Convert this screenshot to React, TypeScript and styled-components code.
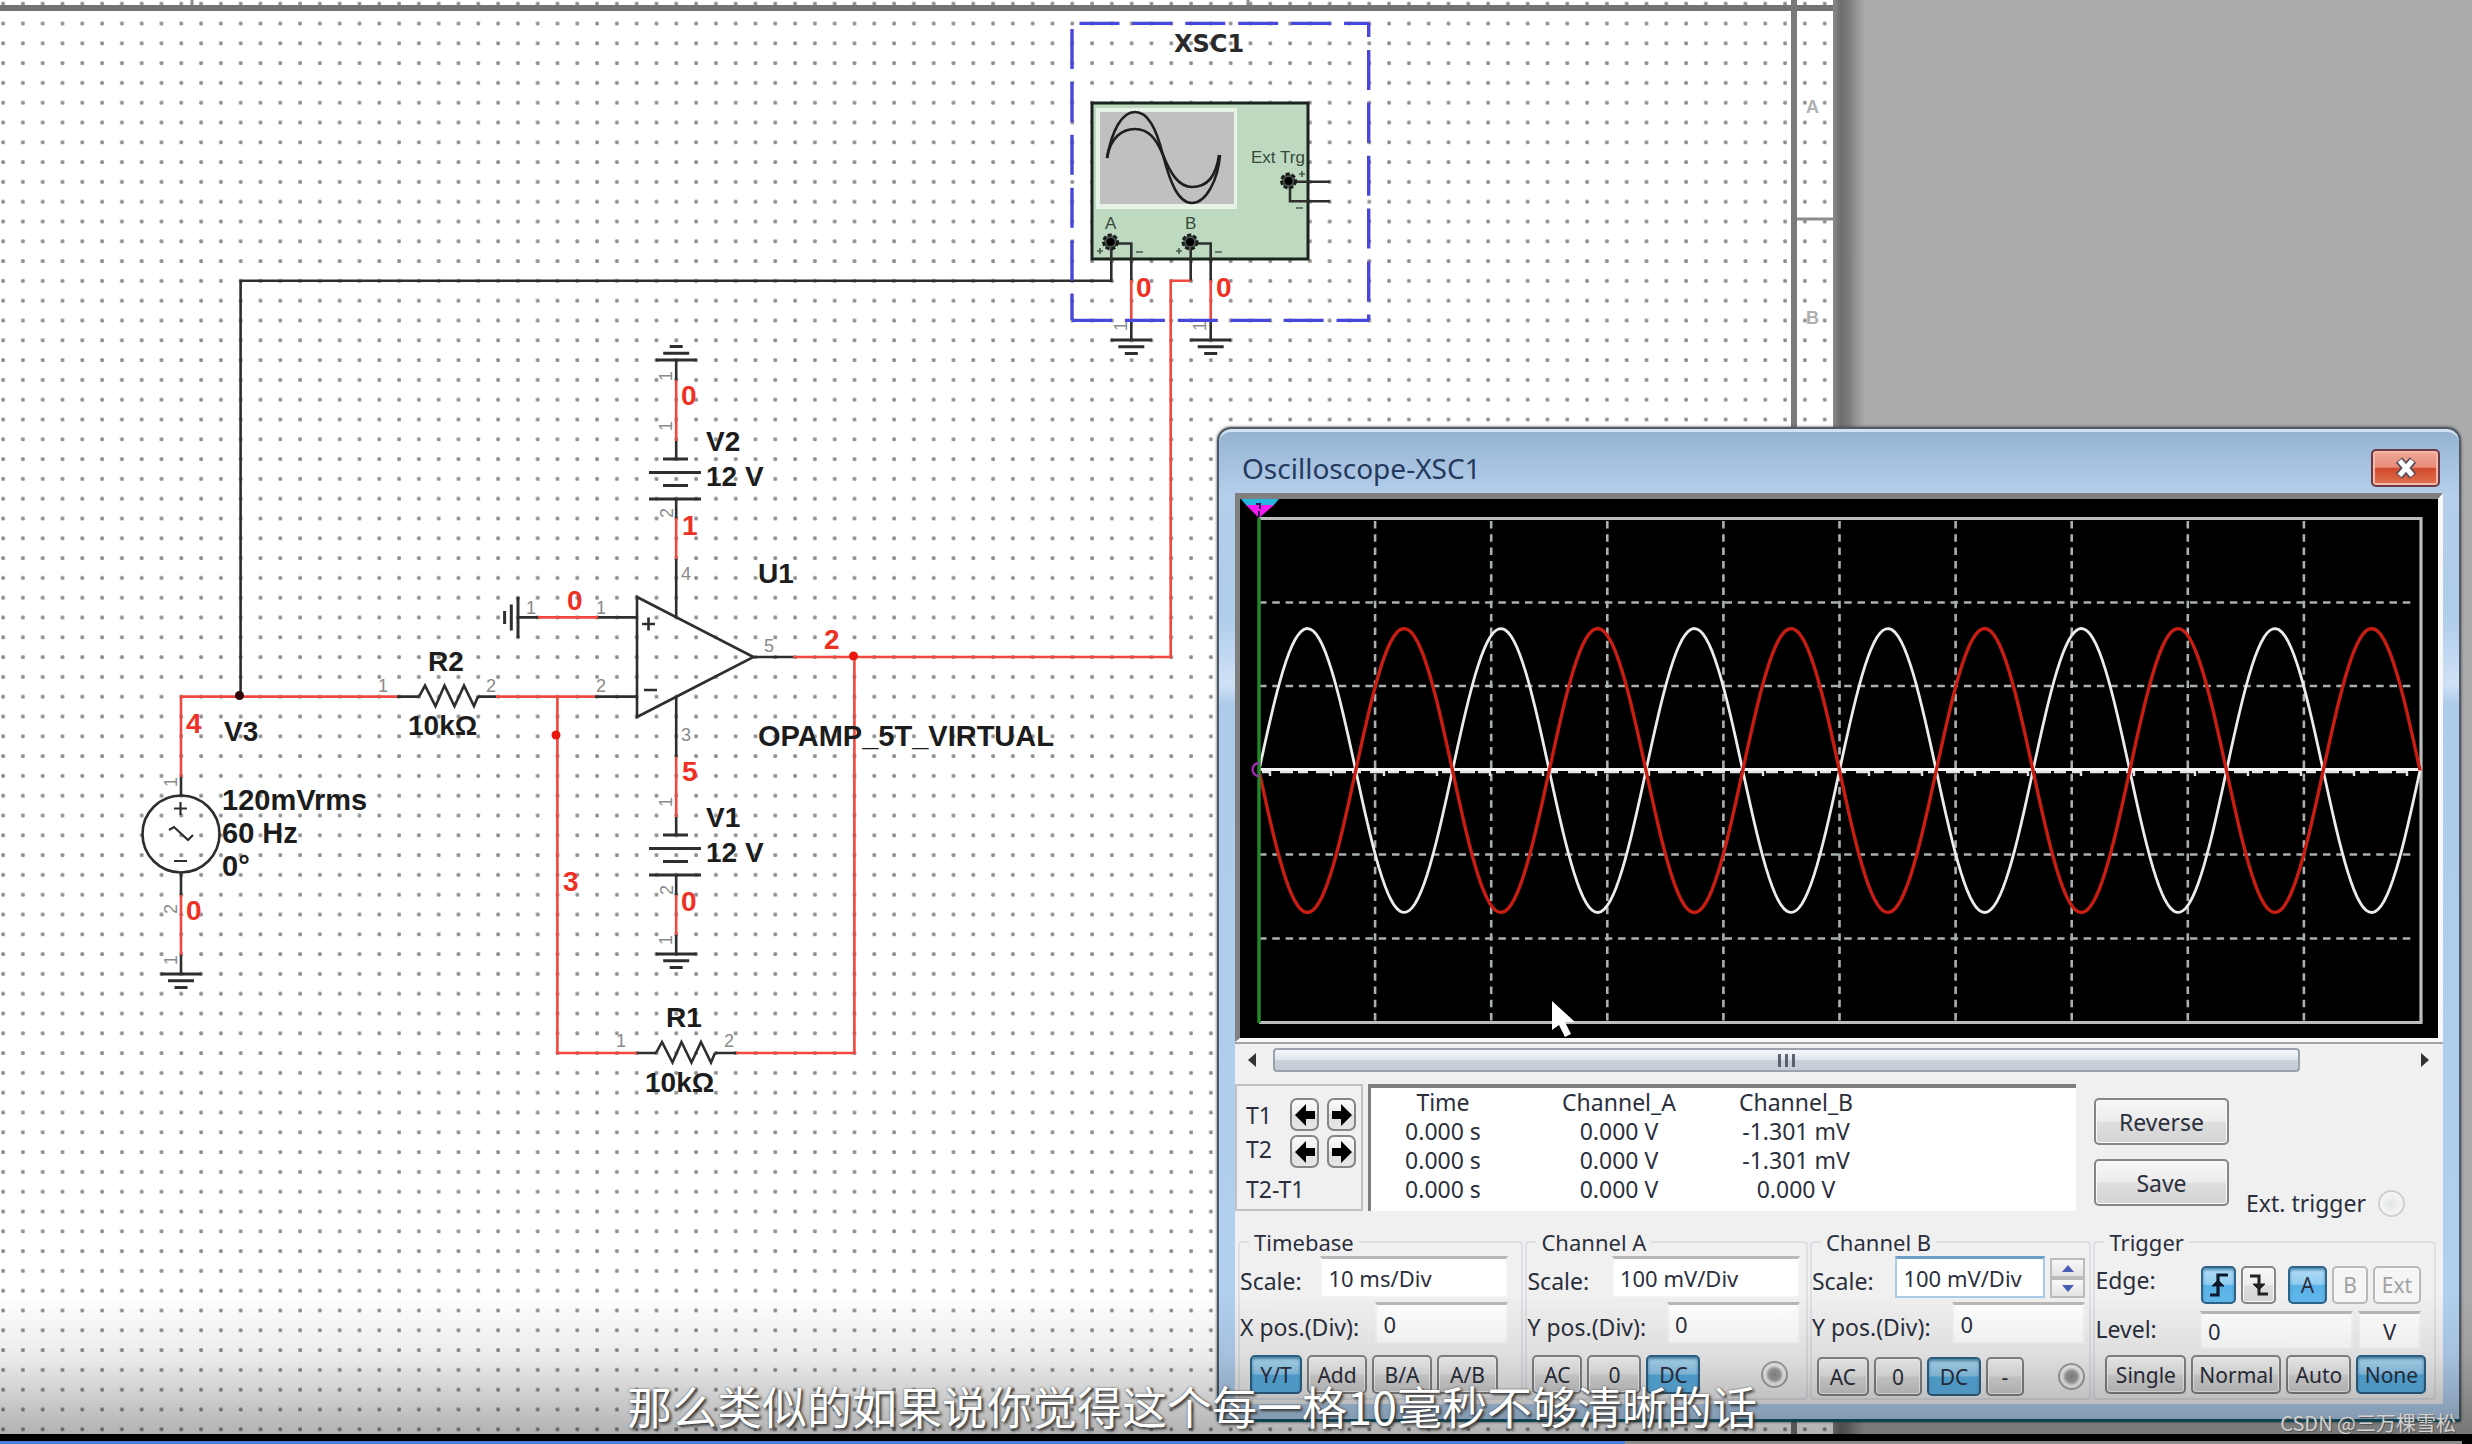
import React from "react";
import styled, { createGlobalStyle, css } from "styled-components";

const uiFont = `"Noto Sans", "Open Sans", sans-serif`;
const cjkFont = `"Noto Sans CJK SC", "Noto Sans", sans-serif`;
const ink = "#2b2f3c";

const GlobalStyle = createGlobalStyle`
  *, *::before, *::after { box-sizing: border-box; }
  body { margin: 0; background: #000; font-family: ${uiFont}; color: ${ink}; }
`;

const Page = styled.div`
  display: flex;
  flex-direction: column;
  min-height: 100vh;
`;

const Workspace = styled.main`
  position: relative;
  flex: 1;
  display: flex;
  overflow: hidden;
  background: #ababab;
`;

const SheetSvg = styled.svg`
  display: block;
  flex: none;
  width: 1833px;
  min-height: 100%;
  background: #fff;
`;

const SheetShadow = styled.div`
  flex: none;
  width: 32px;
  background: linear-gradient(90deg, #8a8a8a 0, #6c6c6c 8px, #7c7c7c 16px, #979797 24px, #ababab);
`;

/* ---------- schematic ---------- */

const WireGroup = styled.g<{ $color: string }>`
  fill: none;
  stroke: ${(p) => p.$color};
  stroke-width: 2.6px;
`;

const PartLabel = styled.text<{ $large?: boolean }>`
  font: 700 ${(p) => (p.$large ? 29 : 28)}px "Liberation Sans", sans-serif;
  fill: #1c1c1c;
`;

const NetLabel = styled.text`
  font: 700 28px "Liberation Sans", sans-serif;
  fill: #ee3124;
`;

const PinLabel = styled.text`
  font: 400 18px "Liberation Sans", sans-serif;
  fill: #8a8a8a;
`;

const ScopeLabel = styled.text`
  font: 400 17px "Liberation Sans", sans-serif;
  fill: #36483a;
`;

const ScopeName = styled.text`
  font: 700 24px "DejaVu Sans", sans-serif;
  fill: #2a2a2a;
`;

const ZoneLabel = styled.text`
  font: 700 18px "Liberation Sans", sans-serif;
  fill: #b0b0b0;
`;

const RED = "#f0483e";
const BLACK = "#2e2e2e";

const Ground = ({ x, y, turn = 0 }: { x: number; y: number; turn?: number }) => (
  <path
    transform={`translate(${x} ${y}) rotate(${turn})`}
    strokeWidth={3}
    d="M-20.5 0H20.5M-13 6.7H13M-6.5 13.4H6.5"
  />
);

const Battery = ({ y }: { y: number }) => (
  <path
    strokeWidth={3}
    d={`M663 ${y}h25M649 ${y + 13.5}h52M663 ${y + 26.5}h25M649 ${y + 40}h52`}
  />
);

const resistor = (x: number, y: number) =>
  `M${x} ${y}l6 -11l10.5 20.5l9 -20.5l10 20.5l9.5 -20.5l10 20.5l4 -9.5`;

const TurnedPin = ({ x, y, children }: { x: number; y: number; children: string }) => (
  <PinLabel transform={`translate(${x} ${y}) rotate(-90)`}>{children}</PinLabel>
);

const Jack = ({ x, y }: { x: number; y: number }) => (
  <g>
    <circle cx={x} cy={y} r={7} fill="#4c5a50" stroke="#1d1d1d" strokeWidth={3} strokeDasharray="4 2" />
    <circle cx={x} cy={y} r={4} fill="#000" />
  </g>
);

const Schematic = () => (
  <SheetSvg role="img" aria-label="Inverting amplifier schematic">
    <defs>
      <pattern id="dots" x="-6.9" y="-6.3" width="19.8" height="19.8" patternUnits="userSpaceOnUse">
        <rect x="8.2" y="8.2" width="3.6" height="3.6" rx="1" fill="#8e8e8e" />
      </pattern>
    </defs>
    <rect width="100%" height="100%" fill="url(#dots)" />
    <rect y="5" width="1833" height="6" fill="#737373" />
    <rect x="1791" width="6" height="100%" fill="#7a7a7a" />
    <path d="M192 0V5M1248 0V5M1797 219H1833" stroke="#8c8c8c" strokeWidth="3" />
    <ZoneLabel x="1806" y="113">A</ZoneLabel>
    <ZoneLabel x="1806" y="324">B</ZoneLabel>

    {/* instrument body */}
    <rect x="1092" y="103" width="216" height="156" fill="#bdd9bf" stroke="#1b241c" strokeWidth="3" />
    <rect x="1096" y="108" width="141" height="101" fill="#e8f3e8" />
    <rect x="1100" y="112" width="134" height="92" fill="#c0c0c0" />
    <g fill="none" stroke="#1e1e1e" strokeWidth="2.6">
      <path d="M1107 158C1112 130 1122 112 1135 112S1156 128 1163 155S1178 203 1192 203S1218 180 1220 155" />
      <path d="M1107 158C1110 138 1122 129 1135 129S1156 138 1163 155S1178 187 1192 187S1216 178 1219 155" />
    </g>
    <ScopeLabel x="1251" y="163">Ext Trg</ScopeLabel>
    <ScopeLabel x="1105" y="229">A</ScopeLabel>
    <ScopeLabel x="1185" y="229">B</ScopeLabel>

    <WireGroup $color={BLACK}>
      {/* source wire to scope channel A */}
      <path d="M240.6 697V280.8H1111.3V242" />
      <path d="M1110 243.5H1131.3V280M1131.3 320V340" />
      <path d="M1190.7 280.8V243.5H1210.7V280M1210.7 320V340" />
      <path d="M1289 181.7H1330M1290 181V201.3H1330" />
      <Ground x={1131.3} y={340} />
      <Ground x={1210.7} y={340} />
      <path d="M1296 208h7M1136 252h7M1215 252h7M1097 251h6M1100 248v6M1176 251h6M1179 248v6M1299 174h6M1302 171v6" stroke="#4a5a4d" strokeWidth="1.6" />
      {/* V2 branch */}
      <Ground x={676.2} y={360} turn={180} />
      <path d="M676.2 360V380M676.2 441V459M676.2 499V518M676.2 559V616" />
      <Battery y={459} />
      {/* op-amp */}
      <path d="M637 597V717L753.5 657Z" />
      <path d="M642 624h13M648.5 617.5v13M644 690h13" />
      <path d="M518 617.4H538M598 617.4H637M595 696.6H637M753 657H793.5" />
      <Ground x={518} y={617.4} turn={90} />
      {/* V1 branch */}
      <path d="M676.2 697V757M676.2 817V835M676.2 875V895M676.2 935V954" />
      <Battery y={835} />
      <Ground x={676.2} y={954} />
      {/* resistors */}
      <path d="M397 696.6H419M478 696.6H496M637 1053H656M715 1053H736" />
      <path d={resistor(419, 696.6)} />
      <path d={resistor(656, 1053)} />
      {/* V3 source */}
      <circle cx="181" cy="834" r="38.5" />
      <path d="M174 808.5h13M180.5 802v13M174 861h13M169 830l5 -3l14 13l5 -5" strokeWidth="2.2" />
      <path d="M181 777V796M181 873V895M181 955V974" />
      <Ground x={181} y={974} />
    </WireGroup>

    <WireGroup $color={RED}>
      <path d="M181 777V696.6H397M181 895V955" />
      <path d="M496 696.6H595M557.4 696.6V1053H637M736 1053H854.4V657" />
      <path d="M793.5 657H1170.7V280.8H1190.7" />
      <path d="M538 617.4H598M1131.3 280V320M1210.7 280V320" />
      <path d="M676.2 380V441M676.2 518V559M676.2 757V817M676.2 895V935" />
    </WireGroup>

    <circle cx="239.5" cy="695.5" r="4.5" fill="#2a0606" />
    <circle cx="556" cy="735" r="4.5" fill="#e8190c" />
    <circle cx="853.5" cy="656" r="4.5" fill="#e8190c" />

    <Jack x={1110.5} y={242} />
    <Jack x={1190} y={242} />
    <Jack x={1288.5} y={181} />

    <g fill="none" stroke="#4747dc" strokeWidth="3.4" strokeDasharray="40 12.9">
      <path d="M1079.5 23.4H1369" />
      <path d="M1072 29V320" />
      <path d="M1072 320.4H1369" />
      <path d="M1368.7 23V320" strokeDashoffset="26" />
    </g>

    <ScopeName x="1174" y="52">XSC1</ScopeName>
    <PartLabel x="706" y="451">V2</PartLabel>
    <PartLabel x="706" y="486">12 V</PartLabel>
    <PartLabel x="758" y="583">U1</PartLabel>
    <PartLabel x="758" y="746" $large>OPAMP_5T_VIRTUAL</PartLabel>
    <PartLabel x="428" y="671">R2</PartLabel>
    <PartLabel x="408" y="735">10kΩ</PartLabel>
    <PartLabel x="224" y="741">V3</PartLabel>
    <PartLabel x="222" y="810" $large>120mVrms</PartLabel>
    <PartLabel x="222" y="843" $large>60 Hz</PartLabel>
    <PartLabel x="222" y="876" $large>0°</PartLabel>
    <PartLabel x="706" y="827">V1</PartLabel>
    <PartLabel x="706" y="862">12 V</PartLabel>
    <PartLabel x="666" y="1027">R1</PartLabel>
    <PartLabel x="645" y="1092">10kΩ</PartLabel>

    <NetLabel x="1136" y="297">0</NetLabel>
    <NetLabel x="1216" y="297">0</NetLabel>
    <NetLabel x="681" y="405">0</NetLabel>
    <NetLabel x="682" y="535">1</NetLabel>
    <NetLabel x="567" y="610">0</NetLabel>
    <NetLabel x="824" y="649">2</NetLabel>
    <NetLabel x="186" y="733">4</NetLabel>
    <NetLabel x="682" y="781">5</NetLabel>
    <NetLabel x="563" y="891">3</NetLabel>
    <NetLabel x="681" y="911">0</NetLabel>
    <NetLabel x="186" y="920">0</NetLabel>

    <PinLabel x="526" y="614">1</PinLabel>
    <PinLabel x="596" y="614">1</PinLabel>
    <PinLabel x="378" y="692">1</PinLabel>
    <PinLabel x="486" y="692">2</PinLabel>
    <PinLabel x="596" y="692">2</PinLabel>
    <PinLabel x="681" y="580">4</PinLabel>
    <PinLabel x="764" y="652">5</PinLabel>
    <PinLabel x="681" y="741">3</PinLabel>
    <PinLabel x="616" y="1047">1</PinLabel>
    <PinLabel x="724" y="1047">2</PinLabel>
    <TurnedPin x={672} y={381}>1</TurnedPin>
    <TurnedPin x={672} y={431}>1</TurnedPin>
    <TurnedPin x={673} y={518}>2</TurnedPin>
    <TurnedPin x={672} y={807}>1</TurnedPin>
    <TurnedPin x={673} y={895}>2</TurnedPin>
    <TurnedPin x={672} y={945}>1</TurnedPin>
    <TurnedPin x={177} y={787}>1</TurnedPin>
    <TurnedPin x={177} y={914}>2</TurnedPin>
    <TurnedPin x={177} y={965}>1</TurnedPin>
    <TurnedPin x={1127} y={331}>1</TurnedPin>
    <TurnedPin x={1206} y={331}>1</TurnedPin>
  </SheetSvg>
);

/* ---------- oscilloscope window ---------- */

const Window = styled.section`
  position: absolute;
  top: 427px;
  left: 1217px;
  right: 11px;
  border: 2px solid #4f5a66;
  border-bottom: 3px solid #155a6c;
  border-radius: 14px 14px 2px 2px;
  padding: 0 16px 15px;
  background: linear-gradient(#94b2d0 0, #b4ceec 64px, #b0cdec 190px, #cfe1f6 255px, #aecbec 275px, #b2d0f0 100%);
  box-shadow: inset 0 4px 0 -1px #d3e2f1, 0 0 3px #444;
`;

const TitleBar = styled.header`
  display: flex;
  align-items: center;
  justify-content: space-between;
  height: 64px;
  padding: 14px 3px 0 7px;
`;

const Title = styled.h1`
  margin: 0;
  font-size: 28px;
  line-height: 36px;
  font-weight: 400;
  color: #24395c;
`;

const CloseButton = styled.button`
  display: grid;
  place-items: center;
  width: 69px;
  height: 38px;
  padding: 0;
  border: 2px solid #6d3a44;
  border-radius: 5px;
  background: linear-gradient(#efa898 0, #e88c78 48%, #cf4a2a 50%, #e0704e 100%);
  box-shadow: inset 0 0 0 2px #f3b9a9;
`;

const Client = styled.div`
  background: #f0f0f0;
`;

const Screen = styled.div`
  border: solid;
  border-width: 6px 5px 4px;
  border-color: #808080 #f8f8f8 #f8f8f8 #808080;
  background: #000;
  box-shadow: 0 2px 0 #a0a4aa;
`;

const ScreenSvg = styled.svg`
  display: block;
  width: 100%;
`;

const wave = (sign: number) => {
  const pts: string[] = [];
  for (let x = 0; x <= 1161; x += 3) {
    const y = 271.5 - sign * 142 * Math.sin((x / 193.5) * Math.PI * 2);
    pts.push(`${19 + x},${y.toFixed(1)}`);
  }
  return pts.join(" ");
};

const jitter = Array.from({ length: 64 }, (_, i) => {
  const w = 8 + ((i * 5) % 8);
  return `M${22 + i * 18} 273h${w}${i % 3 === 0 ? "v4" : ""}`;
}).join("");

const Trace = () => (
  <Screen>
    <ScreenSvg viewBox="0 0 1198 539" role="img" aria-label="Channel traces">
      <g stroke="#a9b0b0" strokeWidth="2.6" strokeDasharray="7.5 5.8">
        {[1, 2, 3, 4, 5, 6, 7, 8, 9].map((n) => (
          <path key={n} d={`M${19 + n * 116.1} 22V523`} />
        ))}
        {[103.5, 187, 355.5, 439.5].map((y) => (
          <path key={y} d={`M19 ${y}H1176`} />
        ))}
      </g>
      <path d="M19 19.5H1181V523.5H19" fill="none" stroke="#bdbdbd" strokeWidth="3.2" />
      <path d="M19 270.5H1181" stroke="#f6f6f6" strokeWidth="3.2" />
      <path d={jitter} fill="none" stroke="#e4e4e4" strokeWidth="2.4" />
      <polyline points={wave(1)} fill="none" stroke="#ececec" strokeWidth="2.8" />
      <polyline points={wave(-1)} fill="none" stroke="#c81d12" strokeWidth="3.4" />
      <path d="M19 19V524" stroke="#1f8a27" strokeWidth="3.4" />
      <path d="M1 0H39L33 7H7Z" fill="#27b6e0" />
      <path d="M6 6H34L19 19Z" fill="#f41cf0" />
      <path d="M16 5h4v5M19 12v6" fill="none" stroke="#301050" strokeWidth="2" />
      <path d="M19 264A6.5 6.5 0 1 0 19 277" fill="none" stroke="#a028b4" strokeWidth="2.4" />
      <path d="M312 502V531L319 526L325 538L331 535L325 523H335Z" fill="#fff" />
    </ScreenSvg>
  </Screen>
);

const ScrollRow = styled.div`
  display: flex;
  align-items: center;
  height: 42px;
  padding: 4px 2px 10px 1px;
`;

const ScrollArrow = styled.button`
  display: grid;
  place-items: center;
  width: 32px;
  height: 24px;
  padding: 0;
  border: 0;
  background: #f0f0f0;
`;

const ScrollTrack = styled.div`
  flex: 1;
  display: flex;
  height: 24px;
  padding: 0 109px 0 5px;
  background: #f1f1f1;
`;

const ScrollThumb = styled.div`
  flex: 1;
  display: flex;
  align-items: center;
  justify-content: center;
  gap: 4px;
  border: 2px solid #9aa3ad;
  border-radius: 4px;
  background: linear-gradient(#f4f7fa, #dfe5ec 48%, #c9d1da 52%, #c4ccd6);
`;

const Grip = styled.i`
  width: 3px;
  height: 13px;
  background: #5a6470;
`;

const ReadingRow = styled.div`
  display: flex;
  align-items: flex-start;
  min-height: 144px;
`;

const CursorPanel = styled.div`
  flex: none;
  display: grid;
  grid-template-columns: 1fr auto;
  grid-template-rows: 34px 36px 1fr;
  width: 128px;
  height: 127px;
  margin-right: 5px;
  padding: 12px 5px 0 9px;
  border: 2px solid #c2c2c2;
  font-size: 23px;
  line-height: 34px;
`;

const ArrowPad = styled.div`
  grid-column: 2;
  grid-row: 1 / 3;
  display: grid;
  grid-template-columns: 29px 29px;
  gap: 4px 8px;
`;

const Difference = styled.span`
  grid-column: 1 / 3;
  line-height: 42px;
`;

const ArrowButton = styled.button`
  display: grid;
  place-items: center;
  padding: 0;
  border: 2px solid #858585;
  border-radius: 7px;
  background: linear-gradient(#fafafa, #ececec 50%, #dedede 50%, #e6e6e6);
`;

const Readout = styled.div`
  flex: 1;
  height: 127px;
  border-top: 4px solid #7f7f7f;
  border-left: 3px solid #7f7f7f;
  background: #fff;
`;

const ReadoutTable = styled.table`
  width: 498px;
  table-layout: fixed;
  border-collapse: collapse;
  font-size: 23px;
  line-height: 29px;
  text-align: center;

  th, td { padding: 0; font-weight: 400; white-space: nowrap; }
`;

const Actions = styled.div`
  flex: none;
  display: grid;
  grid-template-columns: 135px 1fr;
  column-gap: 17px;
  width: 367px;
  padding: 14px 0 0 18px;
`;

const ActionStack = styled.div`
  display: grid;
  gap: 14px;
`;

const ExtTrigger = styled.label`
  align-self: end;
  display: flex;
  align-items: center;
  gap: 12px;
  height: 6px;
  font-size: 23px;
  line-height: 28px;
  white-space: nowrap;
`;

const Radio = styled.input<{ $faint?: boolean }>`
  appearance: none;
  flex: none;
  width: 27px;
  height: 27px;
  margin: 0;
  border: 2px solid ${(p) => (p.$faint ? "#cfcfcf" : "#a3a3a3")};
  border-radius: 50%;
  background: ${(p) =>
    p.$faint
      ? "radial-gradient(#e2e6e2, #f6f6f6 70%)"
      : "radial-gradient(circle, #8d8d8d 0, #a5a5a5 6px, #dcdcdc 8px, #f2f2f2 9px)"};
`;

const PushButton = styled.button<{ $w: number; $h?: number; $big?: boolean }>`
  display: grid;
  place-items: center;
  flex: none;
  width: ${(p) => p.$w}px;
  height: ${(p) => p.$h ?? 39}px;
  padding: 0;
  border: 2px solid #868686;
  border-radius: 5px;
  background: linear-gradient(#f6f6f6 0, #ededed 48%, #dedede 52%, #d4d4d4 100%);
  box-shadow: inset 0 0 0 1px #fafafa;
  font: 400 ${(p) => (p.$big ? 23 : 21)}px/28px ${uiFont};
  color: ${ink};
  white-space: nowrap;

  ${(p) =>
    p["aria-pressed"] &&
    css`
      border-color: #2e6488;
      background: linear-gradient(#b4def6 0, #8fcbf0 48%, #58b0e6 52%, #62b8ec 100%);
      box-shadow: inset 0 2px 3px #4b88ae;
    `}

  &:disabled {
    border-color: #b9b9b9;
    background: #f5f5f5;
    color: #a2a2a2;
  }
`;

const Groups = styled.div`
  display: grid;
  grid-template-columns: 285fr 282fr 281fr 342fr;
  gap: 2px;
  padding: 0 7px 4px 3px;
`;

const Group = styled.fieldset<{ $end: number }>`
  min-width: 0;
  margin: 0;
  padding: 0 ${(p) => p.$end}px 2px 0;
  border: 2px solid #dce0e5;
  border-radius: 4px;
`;

const Legend = styled.legend`
  margin-left: 9px;
  padding: 0 5px;
  font-size: 22px;
  line-height: 28px;
`;

const FieldRow = styled.div<{ $h?: number }>`
  display: flex;
  align-items: flex-end;
  gap: 5px;
  height: ${(p) => p.$h ?? 42}px;
  margin-bottom: 4px;
`;

const FieldLabel = styled.label<{ $flat?: boolean }>`
  flex: 1;
  align-self: center;
  padding-top: ${(p) => (p.$flat ? 0 : 7)}px;
  font-size: 23px;
  line-height: 28px;
  white-space: nowrap;
`;

const Field = styled.input<{ $w: number; $h?: number; $focus?: boolean; $center?: boolean }>`
  flex: none;
  width: ${(p) => p.$w}px;
  height: ${(p) => p.$h ?? 42}px;
  margin: 0;
  padding: 0 6px;
  border: 2px solid ${(p) => (p.$focus ? "#a9cbe8" : "#f4f4f4")};
  border-top: 3px solid ${(p) => (p.$focus ? "#6f9fc6" : "#b8b8b8")};
  border-radius: 0;
  outline: 0;
  background: #fff;
  font: 400 22px/28px ${uiFont};
  color: ${ink};
  text-align: ${(p) => (p.$center ? "center" : "left")};
`;

const Spinner = styled.div`
  flex: none;
  display: grid;
  grid-template-rows: 1fr 1fr;
  width: 35px;
  height: 40px;
`;

const SpinButton = styled.button`
  display: grid;
  place-items: center;
  padding: 0;
  border: 2px solid #bcbcbc;
  background: linear-gradient(#f8f8f8, #e4e4e4);
`;

const ButtonRow = styled.div<{ $left: number; $top?: number }>`
  display: flex;
  align-items: center;
  gap: 5px;
  padding: ${(p) => p.$top ?? 7}px 0 0 ${(p) => p.$left}px;
`;

const Lamp = styled.span<{ $end?: number }>`
  display: flex;
  margin-left: auto;
  margin-right: ${(p) => p.$end ?? 0}px;
`;

const Spacer = styled.span`
  flex: none;
  width: 2px;
`;

const BlockArrow = ({ right }: { right?: boolean }) => (
  <svg width="22" height="22" viewBox="0 0 22 22" aria-hidden="true">
    <path d={right ? "M1 7H10V0L21 11L10 22V15H1Z" : "M21 7H12V0L1 11L12 22V15H21Z"} fill="#000" />
  </svg>
);

const Oscilloscope = () => (
  <Window aria-label="Oscilloscope-XSC1">
    <TitleBar>
      <Title>Oscilloscope-XSC1</Title>
      <CloseButton aria-label="Close">
        <svg width="28" height="24" viewBox="0 0 28 24" aria-hidden="true">
          <path d="M7 4L21 20M21 4L7 20" stroke="#5d4e5c" strokeWidth="8.5" />
          <path d="M7.6 4.6L20.4 19.4M20.4 4.6L7.6 19.4" stroke="#fff" strokeWidth="5" />
        </svg>
      </CloseButton>
    </TitleBar>
    <Client>
      <Trace />
      <ScrollRow>
        <ScrollArrow aria-label="Scroll left">
          <svg width="10" height="14" aria-hidden="true"><path d="M9 0V14L1 7Z" fill="#333" /></svg>
        </ScrollArrow>
        <ScrollTrack>
          <ScrollThumb><Grip /><Grip /><Grip /></ScrollThumb>
        </ScrollTrack>
        <ScrollArrow aria-label="Scroll right">
          <svg width="10" height="14" aria-hidden="true"><path d="M1 0V14L9 7Z" fill="#333" /></svg>
        </ScrollArrow>
      </ScrollRow>

      <ReadingRow>
        <CursorPanel>
          <span>T1</span>
          <ArrowPad>
            <ArrowButton aria-label="T1 left"><BlockArrow /></ArrowButton>
            <ArrowButton aria-label="T1 right"><BlockArrow right /></ArrowButton>
            <ArrowButton aria-label="T2 left"><BlockArrow /></ArrowButton>
            <ArrowButton aria-label="T2 right"><BlockArrow right /></ArrowButton>
          </ArrowPad>
          <span>T2</span>
          <Difference>T2-T1</Difference>
        </CursorPanel>
        <Readout>
          <ReadoutTable>
            <colgroup>
              <col style={{ width: 144 }} />
              <col style={{ width: 208 }} />
              <col style={{ width: 146 }} />
            </colgroup>
            <thead>
              <tr><th>Time</th><th>Channel_A</th><th>Channel_B</th></tr>
            </thead>
            <tbody>
              <tr><td>0.000 s</td><td>0.000 V</td><td>-1.301 mV</td></tr>
              <tr><td>0.000 s</td><td>0.000 V</td><td>-1.301 mV</td></tr>
              <tr><td>0.000 s</td><td>0.000 V</td><td>0.000 V</td></tr>
            </tbody>
          </ReadoutTable>
        </Readout>
        <Actions>
          <ActionStack>
            <PushButton $w={135} $h={47} $big>Reverse</PushButton>
            <PushButton $w={135} $h={47} $big>Save</PushButton>
          </ActionStack>
          <ExtTrigger>
            Ext. trigger
            <Radio type="radio" name="ext" $faint />
          </ExtTrigger>
        </Actions>
      </ReadingRow>

      <Groups>
        <Group $end={13}>
          <Legend>Timebase</Legend>
          <FieldRow>
            <FieldLabel htmlFor="tb-scale">Scale:</FieldLabel>
            <Field id="tb-scale" $w={188} defaultValue="10 ms/Div" />
          </FieldRow>
          <FieldRow>
            <FieldLabel htmlFor="tb-pos">X pos.(Div):</FieldLabel>
            <Field id="tb-pos" $w={133} defaultValue="0" />
          </FieldRow>
          <ButtonRow $left={10}>
            <PushButton $w={52} aria-pressed>Y/T</PushButton>
            <PushButton $w={60}>Add</PushButton>
            <PushButton $w={60}>B/A</PushButton>
            <PushButton $w={61}>A/B</PushButton>
          </ButtonRow>
        </Group>

        <Group $end={6}>
          <Legend>Channel A</Legend>
          <FieldRow>
            <FieldLabel htmlFor="a-scale">Scale:</FieldLabel>
            <Field id="a-scale" $w={188} defaultValue="100 mV/Div" />
          </FieldRow>
          <FieldRow>
            <FieldLabel htmlFor="a-pos">Y pos.(Div):</FieldLabel>
            <Field id="a-pos" $w={133} defaultValue="0" />
          </FieldRow>
          <ButtonRow $left={5}>
            <PushButton $w={50}>AC</PushButton>
            <PushButton $w={54}>0</PushButton>
            <PushButton $w={54} aria-pressed>DC</PushButton>
            <Lamp $end={12}><Radio type="radio" name="ch-a" aria-label="Channel A input" /></Lamp>
          </ButtonRow>
        </Group>

        <Group $end={4}>
          <Legend>Channel B</Legend>
          <FieldRow>
            <FieldLabel htmlFor="b-scale">Scale:</FieldLabel>
            <Field id="b-scale" $w={150} defaultValue="100 mV/Div" $focus />
            <Spinner>
              <SpinButton aria-label="Increase">
                <svg width="12" height="7" aria-hidden="true"><path d="M0 7H12L6 0Z" fill="#4a5fb4" /></svg>
              </SpinButton>
              <SpinButton aria-label="Decrease">
                <svg width="12" height="7" aria-hidden="true"><path d="M0 0H12L6 7Z" fill="#4a5fb4" /></svg>
              </SpinButton>
            </Spinner>
          </FieldRow>
          <FieldRow>
            <FieldLabel htmlFor="b-pos">Y pos.(Div):</FieldLabel>
            <Field id="b-pos" $w={133} defaultValue="0" />
          </FieldRow>
          <ButtonRow $left={5} $top={9}>
            <PushButton $w={52}>AC</PushButton>
            <PushButton $w={48}>0</PushButton>
            <PushButton $w={54} aria-pressed>DC</PushButton>
            <PushButton $w={38}>-</PushButton>
            <Lamp><Radio type="radio" name="ch-b" aria-label="Channel B input" /></Lamp>
          </ButtonRow>
        </Group>

        <Group $end={13}>
          <Legend>Trigger</Legend>
          <FieldRow $h={48}>
            <FieldLabel as="span" $flat>Edge:</FieldLabel>
            <PushButton $w={35} $h={38} aria-pressed aria-label="Rising edge">
              <svg width="24" height="26" viewBox="0 0 24 26" fill="none" stroke="#0c1a2c" strokeWidth="3.2" aria-hidden="true">
                <path d="M3 23H11V3H21" />
                <path d="M5 14L11 8L17 14Z" fill="#0c1a2c" strokeWidth="1" />
              </svg>
            </PushButton>
            <PushButton $w={35} $h={38} aria-label="Falling edge">
              <svg width="24" height="26" viewBox="0 0 24 26" fill="none" stroke="#222" strokeWidth="3" aria-hidden="true">
                <path d="M3 4H12V22H21" />
                <path d="M6 12L12 18L18 12Z" fill="#222" strokeWidth="1" />
              </svg>
            </PushButton>
            <Spacer />
            <PushButton $w={39} $h={38} aria-pressed>A</PushButton>
            <PushButton $w={36} $h={38} disabled>B</PushButton>
            <PushButton $w={48} $h={38} disabled>Ext</PushButton>
          </FieldRow>
          <FieldRow>
            <FieldLabel htmlFor="level" $flat>Level:</FieldLabel>
            <Field id="level" $w={153} $h={39} defaultValue="0" />
            <Field aria-label="Level unit" $w={63} $h={39} defaultValue="V" $center />
          </FieldRow>
          <ButtonRow $left={10} $top={1}>
            <PushButton $w={81}>Single</PushButton>
            <PushButton $w={90}>Normal</PushButton>
            <PushButton $w={65}>Auto</PushButton>
            <PushButton $w={70} aria-pressed>None</PushButton>
          </ButtonRow>
        </Group>
      </Groups>
    </Client>
  </Window>
);

/* ---------- player overlay ---------- */

const Shade = styled.div`
  position: absolute;
  inset: auto 0 0;
  height: 140px;
  background: linear-gradient(rgba(0, 0, 0, 0), rgba(0, 0, 0, 0.08) 45%, rgba(0, 0, 0, 0.3));
  pointer-events: none;
`;

const Caption = styled.p`
  position: absolute;
  inset: auto 88px 0 0;
  margin: 0;
  font: 400 45px/56px ${cjkFont};
  color: #fff;
  text-align: center;
  text-shadow: 2px 2px 3px #333, 0 0 2px #555;
`;

const Watermark = styled.p`
  position: absolute;
  right: 16px;
  bottom: 0;
  margin: 0;
  font: 400 20px/22px ${cjkFont};
  color: #d2d2d2;
  text-shadow: 1px 1px 1px #555;
`;

const PlayerBar = styled.footer`
  display: flex;
  padding: 7px 10px 0 0;
  background: #000;
`;

const Progress = styled.progress`
  appearance: none;
  display: block;
  width: 100%;
  height: 3px;
  border: 0;

  &::-webkit-progress-bar { background: #8c8c8c; }
  &::-webkit-progress-value { background: #4c7fe0; }
`;

export default function App() {
  return (
    <Page>
      <GlobalStyle />
      <Workspace>
        <Schematic />
        <SheetShadow />
        <Oscilloscope />
        <Shade />
        <Caption>那么类似的如果说你觉得这个每一格10毫秒不够清晰的话</Caption>
        <Watermark>CSDN @三万棵雪松</Watermark>
      </Workspace>
      <PlayerBar>
        <Progress max={100} value={66} aria-label="Playback position" />
      </PlayerBar>
    </Page>
  );
}
